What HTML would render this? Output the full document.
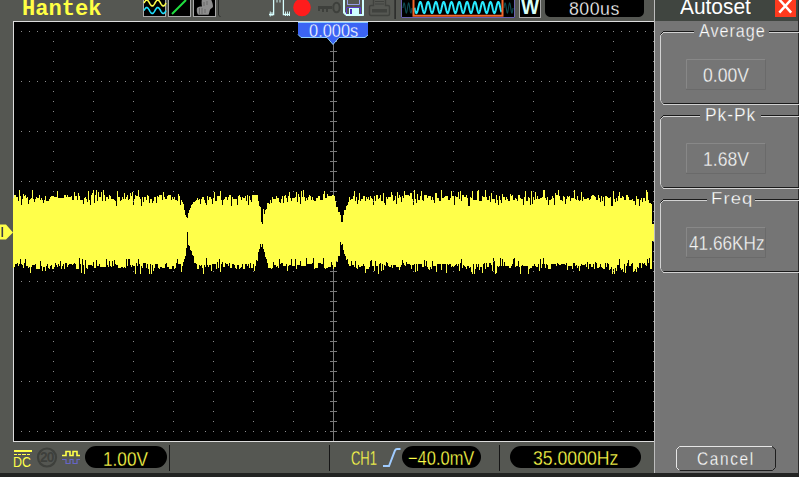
<!DOCTYPE html>
<html><head><meta charset="utf-8">
<style>
html,body{margin:0;padding:0;width:799px;height:477px;overflow:hidden;background:#555752;}
body{position:relative;font-family:"Liberation Sans",sans-serif;}
.a{position:absolute;}
.t{position:absolute;white-space:nowrap;line-height:1;}
.lab{color:#fff;font-size:17px;letter-spacing:0.6px;}
.val{color:#f4f4f4;font-size:18px;}
</style></head><body>

<!-- bottom dark strip -->
<div class="a" style="left:0;top:473px;width:799px;height:4px;background:#222322;"></div>

<!-- grid -->
<div class="a" style="left:13px;top:21px;width:641px;height:421px;background:#000;"></div>
<svg class="a" style="left:0;top:0" width="799" height="477" viewBox="0 0 799 477" shape-rendering="crispEdges">
  <rect x="13" y="21" width="641" height="1" fill="#dcdcdc"/>
  <rect x="13" y="441" width="641" height="1" fill="#dcdcdc"/>
  <rect x="13" y="21" width="1" height="421" fill="#dcdcdc"/>
  <path d="M21,31h1v1h-1zM29,31h1v1h-1zM37,31h1v1h-1zM45,31h1v1h-1zM53,31h1v1h-1zM61,31h1v1h-1zM69,31h1v1h-1zM77,31h1v1h-1zM85,31h1v1h-1zM93,31h1v1h-1zM101,31h1v1h-1zM109,31h1v1h-1zM117,31h1v1h-1zM125,31h1v1h-1zM133,31h1v1h-1zM141,31h1v1h-1zM149,31h1v1h-1zM157,31h1v1h-1zM165,31h1v1h-1zM173,31h1v1h-1zM181,31h1v1h-1zM189,31h1v1h-1zM197,31h1v1h-1zM205,31h1v1h-1zM213,31h1v1h-1zM221,31h1v1h-1zM229,31h1v1h-1zM237,31h1v1h-1zM245,31h1v1h-1zM253,31h1v1h-1zM261,31h1v1h-1zM269,31h1v1h-1zM277,31h1v1h-1zM285,31h1v1h-1zM293,31h1v1h-1zM301,31h1v1h-1zM309,31h1v1h-1zM317,31h1v1h-1zM325,31h1v1h-1zM333,31h1v1h-1zM341,31h1v1h-1zM349,31h1v1h-1zM357,31h1v1h-1zM365,31h1v1h-1zM373,31h1v1h-1zM381,31h1v1h-1zM389,31h1v1h-1zM397,31h1v1h-1zM405,31h1v1h-1zM413,31h1v1h-1zM421,31h1v1h-1zM429,31h1v1h-1zM437,31h1v1h-1zM445,31h1v1h-1zM453,31h1v1h-1zM461,31h1v1h-1zM469,31h1v1h-1zM477,31h1v1h-1zM485,31h1v1h-1zM493,31h1v1h-1zM501,31h1v1h-1zM509,31h1v1h-1zM517,31h1v1h-1zM525,31h1v1h-1zM533,31h1v1h-1zM541,31h1v1h-1zM549,31h1v1h-1zM557,31h1v1h-1zM565,31h1v1h-1zM573,31h1v1h-1zM581,31h1v1h-1zM589,31h1v1h-1zM597,31h1v1h-1zM605,31h1v1h-1zM613,31h1v1h-1zM621,31h1v1h-1zM629,31h1v1h-1zM637,31h1v1h-1zM645,31h1v1h-1zM653,31h1v1h-1zM21,81h1v1h-1zM29,81h1v1h-1zM37,81h1v1h-1zM45,81h1v1h-1zM53,81h1v1h-1zM61,81h1v1h-1zM69,81h1v1h-1zM77,81h1v1h-1zM85,81h1v1h-1zM93,81h1v1h-1zM101,81h1v1h-1zM109,81h1v1h-1zM117,81h1v1h-1zM125,81h1v1h-1zM133,81h1v1h-1zM141,81h1v1h-1zM149,81h1v1h-1zM157,81h1v1h-1zM165,81h1v1h-1zM173,81h1v1h-1zM181,81h1v1h-1zM189,81h1v1h-1zM197,81h1v1h-1zM205,81h1v1h-1zM213,81h1v1h-1zM221,81h1v1h-1zM229,81h1v1h-1zM237,81h1v1h-1zM245,81h1v1h-1zM253,81h1v1h-1zM261,81h1v1h-1zM269,81h1v1h-1zM277,81h1v1h-1zM285,81h1v1h-1zM293,81h1v1h-1zM301,81h1v1h-1zM309,81h1v1h-1zM317,81h1v1h-1zM325,81h1v1h-1zM333,81h1v1h-1zM341,81h1v1h-1zM349,81h1v1h-1zM357,81h1v1h-1zM365,81h1v1h-1zM373,81h1v1h-1zM381,81h1v1h-1zM389,81h1v1h-1zM397,81h1v1h-1zM405,81h1v1h-1zM413,81h1v1h-1zM421,81h1v1h-1zM429,81h1v1h-1zM437,81h1v1h-1zM445,81h1v1h-1zM453,81h1v1h-1zM461,81h1v1h-1zM469,81h1v1h-1zM477,81h1v1h-1zM485,81h1v1h-1zM493,81h1v1h-1zM501,81h1v1h-1zM509,81h1v1h-1zM517,81h1v1h-1zM525,81h1v1h-1zM533,81h1v1h-1zM541,81h1v1h-1zM549,81h1v1h-1zM557,81h1v1h-1zM565,81h1v1h-1zM573,81h1v1h-1zM581,81h1v1h-1zM589,81h1v1h-1zM597,81h1v1h-1zM605,81h1v1h-1zM613,81h1v1h-1zM621,81h1v1h-1zM629,81h1v1h-1zM637,81h1v1h-1zM645,81h1v1h-1zM653,81h1v1h-1zM21,131h1v1h-1zM29,131h1v1h-1zM37,131h1v1h-1zM45,131h1v1h-1zM53,131h1v1h-1zM61,131h1v1h-1zM69,131h1v1h-1zM77,131h1v1h-1zM85,131h1v1h-1zM93,131h1v1h-1zM101,131h1v1h-1zM109,131h1v1h-1zM117,131h1v1h-1zM125,131h1v1h-1zM133,131h1v1h-1zM141,131h1v1h-1zM149,131h1v1h-1zM157,131h1v1h-1zM165,131h1v1h-1zM173,131h1v1h-1zM181,131h1v1h-1zM189,131h1v1h-1zM197,131h1v1h-1zM205,131h1v1h-1zM213,131h1v1h-1zM221,131h1v1h-1zM229,131h1v1h-1zM237,131h1v1h-1zM245,131h1v1h-1zM253,131h1v1h-1zM261,131h1v1h-1zM269,131h1v1h-1zM277,131h1v1h-1zM285,131h1v1h-1zM293,131h1v1h-1zM301,131h1v1h-1zM309,131h1v1h-1zM317,131h1v1h-1zM325,131h1v1h-1zM333,131h1v1h-1zM341,131h1v1h-1zM349,131h1v1h-1zM357,131h1v1h-1zM365,131h1v1h-1zM373,131h1v1h-1zM381,131h1v1h-1zM389,131h1v1h-1zM397,131h1v1h-1zM405,131h1v1h-1zM413,131h1v1h-1zM421,131h1v1h-1zM429,131h1v1h-1zM437,131h1v1h-1zM445,131h1v1h-1zM453,131h1v1h-1zM461,131h1v1h-1zM469,131h1v1h-1zM477,131h1v1h-1zM485,131h1v1h-1zM493,131h1v1h-1zM501,131h1v1h-1zM509,131h1v1h-1zM517,131h1v1h-1zM525,131h1v1h-1zM533,131h1v1h-1zM541,131h1v1h-1zM549,131h1v1h-1zM557,131h1v1h-1zM565,131h1v1h-1zM573,131h1v1h-1zM581,131h1v1h-1zM589,131h1v1h-1zM597,131h1v1h-1zM605,131h1v1h-1zM613,131h1v1h-1zM621,131h1v1h-1zM629,131h1v1h-1zM637,131h1v1h-1zM645,131h1v1h-1zM653,131h1v1h-1zM21,181h1v1h-1zM29,181h1v1h-1zM37,181h1v1h-1zM45,181h1v1h-1zM53,181h1v1h-1zM61,181h1v1h-1zM69,181h1v1h-1zM77,181h1v1h-1zM85,181h1v1h-1zM93,181h1v1h-1zM101,181h1v1h-1zM109,181h1v1h-1zM117,181h1v1h-1zM125,181h1v1h-1zM133,181h1v1h-1zM141,181h1v1h-1zM149,181h1v1h-1zM157,181h1v1h-1zM165,181h1v1h-1zM173,181h1v1h-1zM181,181h1v1h-1zM189,181h1v1h-1zM197,181h1v1h-1zM205,181h1v1h-1zM213,181h1v1h-1zM221,181h1v1h-1zM229,181h1v1h-1zM237,181h1v1h-1zM245,181h1v1h-1zM253,181h1v1h-1zM261,181h1v1h-1zM269,181h1v1h-1zM277,181h1v1h-1zM285,181h1v1h-1zM293,181h1v1h-1zM301,181h1v1h-1zM309,181h1v1h-1zM317,181h1v1h-1zM325,181h1v1h-1zM333,181h1v1h-1zM341,181h1v1h-1zM349,181h1v1h-1zM357,181h1v1h-1zM365,181h1v1h-1zM373,181h1v1h-1zM381,181h1v1h-1zM389,181h1v1h-1zM397,181h1v1h-1zM405,181h1v1h-1zM413,181h1v1h-1zM421,181h1v1h-1zM429,181h1v1h-1zM437,181h1v1h-1zM445,181h1v1h-1zM453,181h1v1h-1zM461,181h1v1h-1zM469,181h1v1h-1zM477,181h1v1h-1zM485,181h1v1h-1zM493,181h1v1h-1zM501,181h1v1h-1zM509,181h1v1h-1zM517,181h1v1h-1zM525,181h1v1h-1zM533,181h1v1h-1zM541,181h1v1h-1zM549,181h1v1h-1zM557,181h1v1h-1zM565,181h1v1h-1zM573,181h1v1h-1zM581,181h1v1h-1zM589,181h1v1h-1zM597,181h1v1h-1zM605,181h1v1h-1zM613,181h1v1h-1zM621,181h1v1h-1zM629,181h1v1h-1zM637,181h1v1h-1zM645,181h1v1h-1zM653,181h1v1h-1zM21,231h1v1h-1zM29,231h1v1h-1zM37,231h1v1h-1zM45,231h1v1h-1zM53,231h1v1h-1zM61,231h1v1h-1zM69,231h1v1h-1zM77,231h1v1h-1zM85,231h1v1h-1zM93,231h1v1h-1zM101,231h1v1h-1zM109,231h1v1h-1zM117,231h1v1h-1zM125,231h1v1h-1zM133,231h1v1h-1zM141,231h1v1h-1zM149,231h1v1h-1zM157,231h1v1h-1zM165,231h1v1h-1zM173,231h1v1h-1zM181,231h1v1h-1zM189,231h1v1h-1zM197,231h1v1h-1zM205,231h1v1h-1zM213,231h1v1h-1zM221,231h1v1h-1zM229,231h1v1h-1zM237,231h1v1h-1zM245,231h1v1h-1zM253,231h1v1h-1zM261,231h1v1h-1zM269,231h1v1h-1zM277,231h1v1h-1zM285,231h1v1h-1zM293,231h1v1h-1zM301,231h1v1h-1zM309,231h1v1h-1zM317,231h1v1h-1zM325,231h1v1h-1zM333,231h1v1h-1zM341,231h1v1h-1zM349,231h1v1h-1zM357,231h1v1h-1zM365,231h1v1h-1zM373,231h1v1h-1zM381,231h1v1h-1zM389,231h1v1h-1zM397,231h1v1h-1zM405,231h1v1h-1zM413,231h1v1h-1zM421,231h1v1h-1zM429,231h1v1h-1zM437,231h1v1h-1zM445,231h1v1h-1zM453,231h1v1h-1zM461,231h1v1h-1zM469,231h1v1h-1zM477,231h1v1h-1zM485,231h1v1h-1zM493,231h1v1h-1zM501,231h1v1h-1zM509,231h1v1h-1zM517,231h1v1h-1zM525,231h1v1h-1zM533,231h1v1h-1zM541,231h1v1h-1zM549,231h1v1h-1zM557,231h1v1h-1zM565,231h1v1h-1zM573,231h1v1h-1zM581,231h1v1h-1zM589,231h1v1h-1zM597,231h1v1h-1zM605,231h1v1h-1zM613,231h1v1h-1zM621,231h1v1h-1zM629,231h1v1h-1zM637,231h1v1h-1zM645,231h1v1h-1zM653,231h1v1h-1zM21,281h1v1h-1zM29,281h1v1h-1zM37,281h1v1h-1zM45,281h1v1h-1zM53,281h1v1h-1zM61,281h1v1h-1zM69,281h1v1h-1zM77,281h1v1h-1zM85,281h1v1h-1zM93,281h1v1h-1zM101,281h1v1h-1zM109,281h1v1h-1zM117,281h1v1h-1zM125,281h1v1h-1zM133,281h1v1h-1zM141,281h1v1h-1zM149,281h1v1h-1zM157,281h1v1h-1zM165,281h1v1h-1zM173,281h1v1h-1zM181,281h1v1h-1zM189,281h1v1h-1zM197,281h1v1h-1zM205,281h1v1h-1zM213,281h1v1h-1zM221,281h1v1h-1zM229,281h1v1h-1zM237,281h1v1h-1zM245,281h1v1h-1zM253,281h1v1h-1zM261,281h1v1h-1zM269,281h1v1h-1zM277,281h1v1h-1zM285,281h1v1h-1zM293,281h1v1h-1zM301,281h1v1h-1zM309,281h1v1h-1zM317,281h1v1h-1zM325,281h1v1h-1zM333,281h1v1h-1zM341,281h1v1h-1zM349,281h1v1h-1zM357,281h1v1h-1zM365,281h1v1h-1zM373,281h1v1h-1zM381,281h1v1h-1zM389,281h1v1h-1zM397,281h1v1h-1zM405,281h1v1h-1zM413,281h1v1h-1zM421,281h1v1h-1zM429,281h1v1h-1zM437,281h1v1h-1zM445,281h1v1h-1zM453,281h1v1h-1zM461,281h1v1h-1zM469,281h1v1h-1zM477,281h1v1h-1zM485,281h1v1h-1zM493,281h1v1h-1zM501,281h1v1h-1zM509,281h1v1h-1zM517,281h1v1h-1zM525,281h1v1h-1zM533,281h1v1h-1zM541,281h1v1h-1zM549,281h1v1h-1zM557,281h1v1h-1zM565,281h1v1h-1zM573,281h1v1h-1zM581,281h1v1h-1zM589,281h1v1h-1zM597,281h1v1h-1zM605,281h1v1h-1zM613,281h1v1h-1zM621,281h1v1h-1zM629,281h1v1h-1zM637,281h1v1h-1zM645,281h1v1h-1zM653,281h1v1h-1zM21,331h1v1h-1zM29,331h1v1h-1zM37,331h1v1h-1zM45,331h1v1h-1zM53,331h1v1h-1zM61,331h1v1h-1zM69,331h1v1h-1zM77,331h1v1h-1zM85,331h1v1h-1zM93,331h1v1h-1zM101,331h1v1h-1zM109,331h1v1h-1zM117,331h1v1h-1zM125,331h1v1h-1zM133,331h1v1h-1zM141,331h1v1h-1zM149,331h1v1h-1zM157,331h1v1h-1zM165,331h1v1h-1zM173,331h1v1h-1zM181,331h1v1h-1zM189,331h1v1h-1zM197,331h1v1h-1zM205,331h1v1h-1zM213,331h1v1h-1zM221,331h1v1h-1zM229,331h1v1h-1zM237,331h1v1h-1zM245,331h1v1h-1zM253,331h1v1h-1zM261,331h1v1h-1zM269,331h1v1h-1zM277,331h1v1h-1zM285,331h1v1h-1zM293,331h1v1h-1zM301,331h1v1h-1zM309,331h1v1h-1zM317,331h1v1h-1zM325,331h1v1h-1zM333,331h1v1h-1zM341,331h1v1h-1zM349,331h1v1h-1zM357,331h1v1h-1zM365,331h1v1h-1zM373,331h1v1h-1zM381,331h1v1h-1zM389,331h1v1h-1zM397,331h1v1h-1zM405,331h1v1h-1zM413,331h1v1h-1zM421,331h1v1h-1zM429,331h1v1h-1zM437,331h1v1h-1zM445,331h1v1h-1zM453,331h1v1h-1zM461,331h1v1h-1zM469,331h1v1h-1zM477,331h1v1h-1zM485,331h1v1h-1zM493,331h1v1h-1zM501,331h1v1h-1zM509,331h1v1h-1zM517,331h1v1h-1zM525,331h1v1h-1zM533,331h1v1h-1zM541,331h1v1h-1zM549,331h1v1h-1zM557,331h1v1h-1zM565,331h1v1h-1zM573,331h1v1h-1zM581,331h1v1h-1zM589,331h1v1h-1zM597,331h1v1h-1zM605,331h1v1h-1zM613,331h1v1h-1zM621,331h1v1h-1zM629,331h1v1h-1zM637,331h1v1h-1zM645,331h1v1h-1zM653,331h1v1h-1zM21,381h1v1h-1zM29,381h1v1h-1zM37,381h1v1h-1zM45,381h1v1h-1zM53,381h1v1h-1zM61,381h1v1h-1zM69,381h1v1h-1zM77,381h1v1h-1zM85,381h1v1h-1zM93,381h1v1h-1zM101,381h1v1h-1zM109,381h1v1h-1zM117,381h1v1h-1zM125,381h1v1h-1zM133,381h1v1h-1zM141,381h1v1h-1zM149,381h1v1h-1zM157,381h1v1h-1zM165,381h1v1h-1zM173,381h1v1h-1zM181,381h1v1h-1zM189,381h1v1h-1zM197,381h1v1h-1zM205,381h1v1h-1zM213,381h1v1h-1zM221,381h1v1h-1zM229,381h1v1h-1zM237,381h1v1h-1zM245,381h1v1h-1zM253,381h1v1h-1zM261,381h1v1h-1zM269,381h1v1h-1zM277,381h1v1h-1zM285,381h1v1h-1zM293,381h1v1h-1zM301,381h1v1h-1zM309,381h1v1h-1zM317,381h1v1h-1zM325,381h1v1h-1zM333,381h1v1h-1zM341,381h1v1h-1zM349,381h1v1h-1zM357,381h1v1h-1zM365,381h1v1h-1zM373,381h1v1h-1zM381,381h1v1h-1zM389,381h1v1h-1zM397,381h1v1h-1zM405,381h1v1h-1zM413,381h1v1h-1zM421,381h1v1h-1zM429,381h1v1h-1zM437,381h1v1h-1zM445,381h1v1h-1zM453,381h1v1h-1zM461,381h1v1h-1zM469,381h1v1h-1zM477,381h1v1h-1zM485,381h1v1h-1zM493,381h1v1h-1zM501,381h1v1h-1zM509,381h1v1h-1zM517,381h1v1h-1zM525,381h1v1h-1zM533,381h1v1h-1zM541,381h1v1h-1zM549,381h1v1h-1zM557,381h1v1h-1zM565,381h1v1h-1zM573,381h1v1h-1zM581,381h1v1h-1zM589,381h1v1h-1zM597,381h1v1h-1zM605,381h1v1h-1zM613,381h1v1h-1zM621,381h1v1h-1zM629,381h1v1h-1zM637,381h1v1h-1zM645,381h1v1h-1zM653,381h1v1h-1zM21,431h1v1h-1zM29,431h1v1h-1zM37,431h1v1h-1zM45,431h1v1h-1zM53,431h1v1h-1zM61,431h1v1h-1zM69,431h1v1h-1zM77,431h1v1h-1zM85,431h1v1h-1zM93,431h1v1h-1zM101,431h1v1h-1zM109,431h1v1h-1zM117,431h1v1h-1zM125,431h1v1h-1zM133,431h1v1h-1zM141,431h1v1h-1zM149,431h1v1h-1zM157,431h1v1h-1zM165,431h1v1h-1zM173,431h1v1h-1zM181,431h1v1h-1zM189,431h1v1h-1zM197,431h1v1h-1zM205,431h1v1h-1zM213,431h1v1h-1zM221,431h1v1h-1zM229,431h1v1h-1zM237,431h1v1h-1zM245,431h1v1h-1zM253,431h1v1h-1zM261,431h1v1h-1zM269,431h1v1h-1zM277,431h1v1h-1zM285,431h1v1h-1zM293,431h1v1h-1zM301,431h1v1h-1zM309,431h1v1h-1zM317,431h1v1h-1zM325,431h1v1h-1zM333,431h1v1h-1zM341,431h1v1h-1zM349,431h1v1h-1zM357,431h1v1h-1zM365,431h1v1h-1zM373,431h1v1h-1zM381,431h1v1h-1zM389,431h1v1h-1zM397,431h1v1h-1zM405,431h1v1h-1zM413,431h1v1h-1zM421,431h1v1h-1zM429,431h1v1h-1zM437,431h1v1h-1zM445,431h1v1h-1zM453,431h1v1h-1zM461,431h1v1h-1zM469,431h1v1h-1zM477,431h1v1h-1zM485,431h1v1h-1zM493,431h1v1h-1zM501,431h1v1h-1zM509,431h1v1h-1zM517,431h1v1h-1zM525,431h1v1h-1zM533,431h1v1h-1zM541,431h1v1h-1zM549,431h1v1h-1zM557,431h1v1h-1zM565,431h1v1h-1zM573,431h1v1h-1zM581,431h1v1h-1zM589,431h1v1h-1zM597,431h1v1h-1zM605,431h1v1h-1zM613,431h1v1h-1zM621,431h1v1h-1zM629,431h1v1h-1zM637,431h1v1h-1zM645,431h1v1h-1zM653,431h1v1h-1zM53,41h1v1h-1zM53,51h1v1h-1zM53,61h1v1h-1zM53,71h1v1h-1zM53,91h1v1h-1zM53,101h1v1h-1zM53,111h1v1h-1zM53,121h1v1h-1zM53,141h1v1h-1zM53,151h1v1h-1zM53,161h1v1h-1zM53,171h1v1h-1zM53,191h1v1h-1zM53,201h1v1h-1zM53,211h1v1h-1zM53,221h1v1h-1zM53,241h1v1h-1zM53,251h1v1h-1zM53,261h1v1h-1zM53,271h1v1h-1zM53,291h1v1h-1zM53,301h1v1h-1zM53,311h1v1h-1zM53,321h1v1h-1zM53,341h1v1h-1zM53,351h1v1h-1zM53,361h1v1h-1zM53,371h1v1h-1zM53,391h1v1h-1zM53,401h1v1h-1zM53,411h1v1h-1zM53,421h1v1h-1zM93,41h1v1h-1zM93,51h1v1h-1zM93,61h1v1h-1zM93,71h1v1h-1zM93,91h1v1h-1zM93,101h1v1h-1zM93,111h1v1h-1zM93,121h1v1h-1zM93,141h1v1h-1zM93,151h1v1h-1zM93,161h1v1h-1zM93,171h1v1h-1zM93,191h1v1h-1zM93,201h1v1h-1zM93,211h1v1h-1zM93,221h1v1h-1zM93,241h1v1h-1zM93,251h1v1h-1zM93,261h1v1h-1zM93,271h1v1h-1zM93,291h1v1h-1zM93,301h1v1h-1zM93,311h1v1h-1zM93,321h1v1h-1zM93,341h1v1h-1zM93,351h1v1h-1zM93,361h1v1h-1zM93,371h1v1h-1zM93,391h1v1h-1zM93,401h1v1h-1zM93,411h1v1h-1zM93,421h1v1h-1zM133,41h1v1h-1zM133,51h1v1h-1zM133,61h1v1h-1zM133,71h1v1h-1zM133,91h1v1h-1zM133,101h1v1h-1zM133,111h1v1h-1zM133,121h1v1h-1zM133,141h1v1h-1zM133,151h1v1h-1zM133,161h1v1h-1zM133,171h1v1h-1zM133,191h1v1h-1zM133,201h1v1h-1zM133,211h1v1h-1zM133,221h1v1h-1zM133,241h1v1h-1zM133,251h1v1h-1zM133,261h1v1h-1zM133,271h1v1h-1zM133,291h1v1h-1zM133,301h1v1h-1zM133,311h1v1h-1zM133,321h1v1h-1zM133,341h1v1h-1zM133,351h1v1h-1zM133,361h1v1h-1zM133,371h1v1h-1zM133,391h1v1h-1zM133,401h1v1h-1zM133,411h1v1h-1zM133,421h1v1h-1zM173,41h1v1h-1zM173,51h1v1h-1zM173,61h1v1h-1zM173,71h1v1h-1zM173,91h1v1h-1zM173,101h1v1h-1zM173,111h1v1h-1zM173,121h1v1h-1zM173,141h1v1h-1zM173,151h1v1h-1zM173,161h1v1h-1zM173,171h1v1h-1zM173,191h1v1h-1zM173,201h1v1h-1zM173,211h1v1h-1zM173,221h1v1h-1zM173,241h1v1h-1zM173,251h1v1h-1zM173,261h1v1h-1zM173,271h1v1h-1zM173,291h1v1h-1zM173,301h1v1h-1zM173,311h1v1h-1zM173,321h1v1h-1zM173,341h1v1h-1zM173,351h1v1h-1zM173,361h1v1h-1zM173,371h1v1h-1zM173,391h1v1h-1zM173,401h1v1h-1zM173,411h1v1h-1zM173,421h1v1h-1zM213,41h1v1h-1zM213,51h1v1h-1zM213,61h1v1h-1zM213,71h1v1h-1zM213,91h1v1h-1zM213,101h1v1h-1zM213,111h1v1h-1zM213,121h1v1h-1zM213,141h1v1h-1zM213,151h1v1h-1zM213,161h1v1h-1zM213,171h1v1h-1zM213,191h1v1h-1zM213,201h1v1h-1zM213,211h1v1h-1zM213,221h1v1h-1zM213,241h1v1h-1zM213,251h1v1h-1zM213,261h1v1h-1zM213,271h1v1h-1zM213,291h1v1h-1zM213,301h1v1h-1zM213,311h1v1h-1zM213,321h1v1h-1zM213,341h1v1h-1zM213,351h1v1h-1zM213,361h1v1h-1zM213,371h1v1h-1zM213,391h1v1h-1zM213,401h1v1h-1zM213,411h1v1h-1zM213,421h1v1h-1zM253,41h1v1h-1zM253,51h1v1h-1zM253,61h1v1h-1zM253,71h1v1h-1zM253,91h1v1h-1zM253,101h1v1h-1zM253,111h1v1h-1zM253,121h1v1h-1zM253,141h1v1h-1zM253,151h1v1h-1zM253,161h1v1h-1zM253,171h1v1h-1zM253,191h1v1h-1zM253,201h1v1h-1zM253,211h1v1h-1zM253,221h1v1h-1zM253,241h1v1h-1zM253,251h1v1h-1zM253,261h1v1h-1zM253,271h1v1h-1zM253,291h1v1h-1zM253,301h1v1h-1zM253,311h1v1h-1zM253,321h1v1h-1zM253,341h1v1h-1zM253,351h1v1h-1zM253,361h1v1h-1zM253,371h1v1h-1zM253,391h1v1h-1zM253,401h1v1h-1zM253,411h1v1h-1zM253,421h1v1h-1zM293,41h1v1h-1zM293,51h1v1h-1zM293,61h1v1h-1zM293,71h1v1h-1zM293,91h1v1h-1zM293,101h1v1h-1zM293,111h1v1h-1zM293,121h1v1h-1zM293,141h1v1h-1zM293,151h1v1h-1zM293,161h1v1h-1zM293,171h1v1h-1zM293,191h1v1h-1zM293,201h1v1h-1zM293,211h1v1h-1zM293,221h1v1h-1zM293,241h1v1h-1zM293,251h1v1h-1zM293,261h1v1h-1zM293,271h1v1h-1zM293,291h1v1h-1zM293,301h1v1h-1zM293,311h1v1h-1zM293,321h1v1h-1zM293,341h1v1h-1zM293,351h1v1h-1zM293,361h1v1h-1zM293,371h1v1h-1zM293,391h1v1h-1zM293,401h1v1h-1zM293,411h1v1h-1zM293,421h1v1h-1zM373,41h1v1h-1zM373,51h1v1h-1zM373,61h1v1h-1zM373,71h1v1h-1zM373,91h1v1h-1zM373,101h1v1h-1zM373,111h1v1h-1zM373,121h1v1h-1zM373,141h1v1h-1zM373,151h1v1h-1zM373,161h1v1h-1zM373,171h1v1h-1zM373,191h1v1h-1zM373,201h1v1h-1zM373,211h1v1h-1zM373,221h1v1h-1zM373,241h1v1h-1zM373,251h1v1h-1zM373,261h1v1h-1zM373,271h1v1h-1zM373,291h1v1h-1zM373,301h1v1h-1zM373,311h1v1h-1zM373,321h1v1h-1zM373,341h1v1h-1zM373,351h1v1h-1zM373,361h1v1h-1zM373,371h1v1h-1zM373,391h1v1h-1zM373,401h1v1h-1zM373,411h1v1h-1zM373,421h1v1h-1zM413,41h1v1h-1zM413,51h1v1h-1zM413,61h1v1h-1zM413,71h1v1h-1zM413,91h1v1h-1zM413,101h1v1h-1zM413,111h1v1h-1zM413,121h1v1h-1zM413,141h1v1h-1zM413,151h1v1h-1zM413,161h1v1h-1zM413,171h1v1h-1zM413,191h1v1h-1zM413,201h1v1h-1zM413,211h1v1h-1zM413,221h1v1h-1zM413,241h1v1h-1zM413,251h1v1h-1zM413,261h1v1h-1zM413,271h1v1h-1zM413,291h1v1h-1zM413,301h1v1h-1zM413,311h1v1h-1zM413,321h1v1h-1zM413,341h1v1h-1zM413,351h1v1h-1zM413,361h1v1h-1zM413,371h1v1h-1zM413,391h1v1h-1zM413,401h1v1h-1zM413,411h1v1h-1zM413,421h1v1h-1zM453,41h1v1h-1zM453,51h1v1h-1zM453,61h1v1h-1zM453,71h1v1h-1zM453,91h1v1h-1zM453,101h1v1h-1zM453,111h1v1h-1zM453,121h1v1h-1zM453,141h1v1h-1zM453,151h1v1h-1zM453,161h1v1h-1zM453,171h1v1h-1zM453,191h1v1h-1zM453,201h1v1h-1zM453,211h1v1h-1zM453,221h1v1h-1zM453,241h1v1h-1zM453,251h1v1h-1zM453,261h1v1h-1zM453,271h1v1h-1zM453,291h1v1h-1zM453,301h1v1h-1zM453,311h1v1h-1zM453,321h1v1h-1zM453,341h1v1h-1zM453,351h1v1h-1zM453,361h1v1h-1zM453,371h1v1h-1zM453,391h1v1h-1zM453,401h1v1h-1zM453,411h1v1h-1zM453,421h1v1h-1zM493,41h1v1h-1zM493,51h1v1h-1zM493,61h1v1h-1zM493,71h1v1h-1zM493,91h1v1h-1zM493,101h1v1h-1zM493,111h1v1h-1zM493,121h1v1h-1zM493,141h1v1h-1zM493,151h1v1h-1zM493,161h1v1h-1zM493,171h1v1h-1zM493,191h1v1h-1zM493,201h1v1h-1zM493,211h1v1h-1zM493,221h1v1h-1zM493,241h1v1h-1zM493,251h1v1h-1zM493,261h1v1h-1zM493,271h1v1h-1zM493,291h1v1h-1zM493,301h1v1h-1zM493,311h1v1h-1zM493,321h1v1h-1zM493,341h1v1h-1zM493,351h1v1h-1zM493,361h1v1h-1zM493,371h1v1h-1zM493,391h1v1h-1zM493,401h1v1h-1zM493,411h1v1h-1zM493,421h1v1h-1zM533,41h1v1h-1zM533,51h1v1h-1zM533,61h1v1h-1zM533,71h1v1h-1zM533,91h1v1h-1zM533,101h1v1h-1zM533,111h1v1h-1zM533,121h1v1h-1zM533,141h1v1h-1zM533,151h1v1h-1zM533,161h1v1h-1zM533,171h1v1h-1zM533,191h1v1h-1zM533,201h1v1h-1zM533,211h1v1h-1zM533,221h1v1h-1zM533,241h1v1h-1zM533,251h1v1h-1zM533,261h1v1h-1zM533,271h1v1h-1zM533,291h1v1h-1zM533,301h1v1h-1zM533,311h1v1h-1zM533,321h1v1h-1zM533,341h1v1h-1zM533,351h1v1h-1zM533,361h1v1h-1zM533,371h1v1h-1zM533,391h1v1h-1zM533,401h1v1h-1zM533,411h1v1h-1zM533,421h1v1h-1zM573,41h1v1h-1zM573,51h1v1h-1zM573,61h1v1h-1zM573,71h1v1h-1zM573,91h1v1h-1zM573,101h1v1h-1zM573,111h1v1h-1zM573,121h1v1h-1zM573,141h1v1h-1zM573,151h1v1h-1zM573,161h1v1h-1zM573,171h1v1h-1zM573,191h1v1h-1zM573,201h1v1h-1zM573,211h1v1h-1zM573,221h1v1h-1zM573,241h1v1h-1zM573,251h1v1h-1zM573,261h1v1h-1zM573,271h1v1h-1zM573,291h1v1h-1zM573,301h1v1h-1zM573,311h1v1h-1zM573,321h1v1h-1zM573,341h1v1h-1zM573,351h1v1h-1zM573,361h1v1h-1zM573,371h1v1h-1zM573,391h1v1h-1zM573,401h1v1h-1zM573,411h1v1h-1zM573,421h1v1h-1zM613,41h1v1h-1zM613,51h1v1h-1zM613,61h1v1h-1zM613,71h1v1h-1zM613,91h1v1h-1zM613,101h1v1h-1zM613,111h1v1h-1zM613,121h1v1h-1zM613,141h1v1h-1zM613,151h1v1h-1zM613,161h1v1h-1zM613,171h1v1h-1zM613,191h1v1h-1zM613,201h1v1h-1zM613,211h1v1h-1zM613,221h1v1h-1zM613,241h1v1h-1zM613,251h1v1h-1zM613,261h1v1h-1zM613,271h1v1h-1zM613,291h1v1h-1zM613,301h1v1h-1zM613,311h1v1h-1zM613,321h1v1h-1zM613,341h1v1h-1zM613,351h1v1h-1zM613,361h1v1h-1zM613,371h1v1h-1zM613,391h1v1h-1zM613,401h1v1h-1zM613,411h1v1h-1zM613,421h1v1h-1zM653,41h1v1h-1zM653,51h1v1h-1zM653,61h1v1h-1zM653,71h1v1h-1zM653,91h1v1h-1zM653,101h1v1h-1zM653,111h1v1h-1zM653,121h1v1h-1zM653,141h1v1h-1zM653,151h1v1h-1zM653,161h1v1h-1zM653,171h1v1h-1zM653,191h1v1h-1zM653,201h1v1h-1zM653,211h1v1h-1zM653,221h1v1h-1zM653,241h1v1h-1zM653,251h1v1h-1zM653,261h1v1h-1zM653,271h1v1h-1zM653,291h1v1h-1zM653,301h1v1h-1zM653,311h1v1h-1zM653,321h1v1h-1zM653,341h1v1h-1zM653,351h1v1h-1zM653,361h1v1h-1zM653,371h1v1h-1zM653,391h1v1h-1zM653,401h1v1h-1zM653,411h1v1h-1zM653,421h1v1h-1z" fill="#8a8a8a"/>
  <rect x="333" y="22" width="1" height="419" fill="#7a7a7a"/>
  <path d="M330,31h7v1h-7zM330,41h7v1h-7zM330,51h7v1h-7zM330,61h7v1h-7zM330,71h7v1h-7zM330,81h7v1h-7zM330,91h7v1h-7zM330,101h7v1h-7zM330,111h7v1h-7zM330,121h7v1h-7zM330,131h7v1h-7zM330,141h7v1h-7zM330,151h7v1h-7zM330,161h7v1h-7zM330,171h7v1h-7zM330,181h7v1h-7zM330,191h7v1h-7zM330,201h7v1h-7zM330,211h7v1h-7zM330,221h7v1h-7zM330,231h7v1h-7zM330,241h7v1h-7zM330,251h7v1h-7zM330,261h7v1h-7zM330,271h7v1h-7zM330,281h7v1h-7zM330,291h7v1h-7zM330,301h7v1h-7zM330,311h7v1h-7zM330,321h7v1h-7zM330,331h7v1h-7zM330,341h7v1h-7zM330,351h7v1h-7zM330,361h7v1h-7zM330,371h7v1h-7zM330,381h7v1h-7zM330,391h7v1h-7zM330,401h7v1h-7zM330,411h7v1h-7zM330,421h7v1h-7zM330,431h7v1h-7zM21,228v7h1v-7zM29,228v7h1v-7zM37,228v7h1v-7zM45,228v7h1v-7zM53,228v7h1v-7zM61,228v7h1v-7zM69,228v7h1v-7zM77,228v7h1v-7zM85,228v7h1v-7zM93,228v7h1v-7zM101,228v7h1v-7zM109,228v7h1v-7zM117,228v7h1v-7zM125,228v7h1v-7zM133,228v7h1v-7zM141,228v7h1v-7zM149,228v7h1v-7zM157,228v7h1v-7zM165,228v7h1v-7zM173,228v7h1v-7zM181,228v7h1v-7zM189,228v7h1v-7zM197,228v7h1v-7zM205,228v7h1v-7zM213,228v7h1v-7zM221,228v7h1v-7zM229,228v7h1v-7zM237,228v7h1v-7zM245,228v7h1v-7zM253,228v7h1v-7zM261,228v7h1v-7zM269,228v7h1v-7zM277,228v7h1v-7zM285,228v7h1v-7zM293,228v7h1v-7zM301,228v7h1v-7zM309,228v7h1v-7zM317,228v7h1v-7zM325,228v7h1v-7zM333,228v7h1v-7zM341,228v7h1v-7zM349,228v7h1v-7zM357,228v7h1v-7zM365,228v7h1v-7zM373,228v7h1v-7zM381,228v7h1v-7zM389,228v7h1v-7zM397,228v7h1v-7zM405,228v7h1v-7zM413,228v7h1v-7zM421,228v7h1v-7zM429,228v7h1v-7zM437,228v7h1v-7zM445,228v7h1v-7zM453,228v7h1v-7zM461,228v7h1v-7zM469,228v7h1v-7zM477,228v7h1v-7zM485,228v7h1v-7zM493,228v7h1v-7zM501,228v7h1v-7zM509,228v7h1v-7zM517,228v7h1v-7zM525,228v7h1v-7zM533,228v7h1v-7zM541,228v7h1v-7zM549,228v7h1v-7zM557,228v7h1v-7zM565,228v7h1v-7zM573,228v7h1v-7zM581,228v7h1v-7zM589,228v7h1v-7zM597,228v7h1v-7zM605,228v7h1v-7zM613,228v7h1v-7zM621,228v7h1v-7zM629,228v7h1v-7zM637,228v7h1v-7zM645,228v7h1v-7zM653,228v7h1v-7z" fill="#7a7a7a"/>
  <path d="M13,198 14,198 14,195 15,195 15,195 16,195 16,197 17,197 17,197 18,197 18,201 19,201 19,190 20,190 20,196 21,196 21,205 22,205 22,199 23,199 23,194 24,194 24,196 25,196 25,195 26,195 26,198 27,198 27,197 28,197 28,204 29,204 29,200 30,200 30,199 31,199 31,198 32,198 32,190 33,190 33,199 34,199 34,202 35,202 35,199 36,199 36,197 37,197 37,198 38,198 38,198 39,198 39,195 40,195 40,200 41,200 41,198 42,198 42,200 43,200 43,203 44,203 44,200 45,200 45,196 46,196 46,201 47,201 47,201 48,201 48,201 49,201 49,199 50,199 50,197 51,197 51,196 52,196 52,196 53,196 53,196 54,196 54,197 55,197 55,197 56,197 56,197 57,197 57,191 58,191 58,198 59,198 59,198 60,198 60,198 61,198 61,198 62,198 62,198 63,198 63,198 64,198 64,195 65,195 65,195 66,195 66,197 67,197 67,195 68,195 68,197 69,197 69,197 70,197 70,197 71,197 71,196 72,196 72,200 73,200 73,200 74,200 74,192 75,192 75,196 76,196 76,196 77,196 77,200 78,200 78,193 79,193 79,196 80,196 80,200 81,200 81,200 82,200 82,200 83,200 83,204 84,204 84,198 85,198 85,197 86,197 86,199 87,199 87,202 88,202 88,191 89,191 89,200 90,200 90,205 91,205 91,195 92,195 92,193 93,193 93,190 94,190 94,203 95,203 95,195 96,195 96,190 97,190 97,201 98,201 98,192 99,192 99,197 100,197 100,197 101,197 101,192 102,192 102,201 103,201 103,190 104,190 104,195 105,195 105,201 106,201 106,197 107,197 107,197 108,197 108,199 109,199 109,195 110,195 110,196 111,196 111,199 112,199 112,199 113,199 113,199 114,199 114,200 115,200 115,201 116,201 116,206 117,206 117,191 118,191 118,197 119,197 119,197 120,197 120,201 121,201 121,200 122,200 122,197 123,197 123,199 124,199 124,193 125,193 125,199 126,199 126,197 127,197 127,195 128,195 128,200 129,200 129,199 130,199 130,193 131,193 131,196 132,196 132,192 133,192 133,205 134,205 134,199 135,199 135,195 136,195 136,196 137,196 137,196 138,196 138,190 139,190 139,197 140,197 140,199 141,199 141,206 142,206 142,197 143,197 143,202 144,202 144,197 145,197 145,197 146,197 146,200 147,200 147,195 148,195 148,196 149,196 149,203 150,203 150,199 151,199 151,199 152,199 152,203 153,203 153,201 154,201 154,197 155,197 155,197 156,197 156,203 157,203 157,196 158,196 158,197 159,197 159,195 160,195 160,195 161,195 161,195 162,195 162,200 163,200 163,192 164,192 164,197 165,197 165,199 166,199 166,199 167,199 167,196 168,196 168,195 169,195 169,195 170,195 170,195 171,195 171,200 172,200 172,197 173,197 173,199 174,199 174,197 175,197 175,200 176,200 176,200 177,200 177,201 178,201 178,194 179,194 179,196 180,196 180,205 181,205 181,200 182,200 182,202 183,202 183,204 184,204 184,210 185,210 185,215 186,215 186,217 187,217 187,218 188,218 188,213 189,213 189,210 190,210 190,208 191,208 191,205 192,205 192,204 193,204 193,202 194,202 194,202 195,202 195,201 196,201 196,200 197,200 197,198 198,198 198,200 199,200 199,199 200,199 200,204 201,204 201,199 202,199 202,197 203,197 203,197 204,197 204,200 205,200 205,203 206,203 206,205 207,205 207,196 208,196 208,200 209,200 209,197 210,197 210,197 211,197 211,199 212,199 212,204 213,204 213,198 214,198 214,192 215,192 215,201 216,201 216,201 217,201 217,196 218,196 218,196 219,196 219,196 220,196 220,191 221,191 221,200 222,200 222,205 223,205 223,200 224,200 224,199 225,199 225,197 226,197 226,197 227,197 227,200 228,200 228,197 229,197 229,195 230,195 230,195 231,195 231,206 232,206 232,197 233,197 233,199 234,199 234,199 235,199 235,199 236,199 236,199 237,199 237,205 238,205 238,196 239,196 239,195 240,195 240,197 241,197 241,200 242,200 242,197 243,197 243,198 244,198 244,198 245,198 245,196 246,196 246,201 247,201 247,195 248,195 248,205 249,205 249,196 250,196 250,200 251,200 251,202 252,202 252,195 253,195 253,195 254,195 254,195 255,195 255,195 256,195 256,195 257,195 257,195 258,195 258,201 259,201 259,206 260,206 260,207 261,207 261,222 262,222 262,224 263,224 263,209 264,209 264,214 265,214 265,210 266,210 266,209 267,209 267,203 268,203 268,203 269,203 269,204 270,204 270,200 271,200 271,203 272,203 272,197 273,197 273,199 274,199 274,199 275,199 275,199 276,199 276,196 277,196 277,198 278,198 278,198 279,198 279,202 280,202 280,203 281,203 281,199 282,199 282,196 283,196 283,203 284,203 284,196 285,196 285,195 286,195 286,198 287,198 287,202 288,202 288,196 289,196 289,192 290,192 290,198 291,198 291,201 292,201 292,198 293,198 293,198 294,198 294,198 295,198 295,197 296,197 296,192 297,192 297,202 298,202 298,194 299,194 299,197 300,197 300,204 301,204 301,191 302,191 302,197 303,197 303,190 304,190 304,197 305,197 305,201 306,201 306,198 307,198 307,200 308,200 308,197 309,197 309,195 310,195 310,196 311,196 311,200 312,200 312,197 313,197 313,200 314,200 314,201 315,201 315,201 316,201 316,198 317,198 317,198 318,198 318,196 319,196 319,196 320,196 320,200 321,200 321,200 322,200 322,200 323,200 323,194 324,194 324,191 325,191 325,198 326,198 326,198 327,198 327,194 328,194 328,196 329,196 329,196 330,196 330,196 331,196 331,196 332,196 332,195 333,195 333,195 334,195 334,196 335,196 335,201 336,201 336,207 337,207 337,207 338,207 338,212 339,212 339,212 340,212 340,215 341,215 341,222 342,222 342,222 343,222 343,215 344,215 344,210 345,210 345,210 346,210 346,206 347,206 347,205 348,205 348,202 349,202 349,197 350,197 350,200 351,200 351,199 352,199 352,199 353,199 353,196 354,196 354,191 355,191 355,201 356,201 356,197 357,197 357,204 358,204 358,200 359,200 359,193 360,193 360,201 361,201 361,199 362,199 362,199 363,199 363,196 364,196 364,196 365,196 365,201 366,201 366,197 367,197 367,199 368,199 368,197 369,197 369,200 370,200 370,196 371,196 371,198 372,198 372,199 373,199 373,205 374,205 374,196 375,196 375,201 376,201 376,195 377,195 377,195 378,195 378,199 379,199 379,198 380,198 380,195 381,195 381,201 382,201 382,201 383,201 383,193 384,193 384,203 385,203 385,205 386,205 386,197 387,197 387,199 388,199 388,197 389,197 389,197 390,197 390,197 391,197 391,192 392,192 392,195 393,195 393,201 394,201 394,200 395,200 395,196 396,196 396,204 397,204 397,192 398,192 398,198 399,198 399,195 400,195 400,197 401,197 401,202 402,202 402,196 403,196 403,198 404,198 404,191 405,191 405,195 406,195 406,195 407,195 407,195 408,195 408,195 409,195 409,196 410,196 410,193 411,193 411,193 412,193 412,199 413,199 413,205 414,205 414,190 415,190 415,199 416,199 416,203 417,203 417,194 418,194 418,200 419,200 419,200 420,200 420,196 421,196 421,191 422,191 422,200 423,200 423,201 424,201 424,195 425,195 425,195 426,195 426,195 427,195 427,198 428,198 428,196 429,196 429,196 430,196 430,196 431,196 431,200 432,200 432,197 433,197 433,200 434,200 434,203 435,203 435,193 436,193 436,193 437,193 437,198 438,198 438,198 439,198 439,201 440,201 440,201 441,201 441,190 442,190 442,198 443,198 443,198 444,198 444,197 445,197 445,196 446,196 446,196 447,196 447,196 448,196 448,200 449,200 449,200 450,200 450,198 451,198 451,191 452,191 452,196 453,196 453,196 454,196 454,205 455,205 455,196 456,196 456,197 457,197 457,197 458,197 458,192 459,192 459,199 460,199 460,191 461,191 461,201 462,201 462,195 463,195 463,195 464,195 464,197 465,197 465,197 466,197 466,195 467,195 467,198 468,198 468,206 469,206 469,206 470,206 470,197 471,197 471,198 472,198 472,191 473,191 473,200 474,200 474,200 475,200 475,200 476,200 476,200 477,200 477,191 478,191 478,190 479,190 479,201 480,201 480,201 481,201 481,201 482,201 482,196 483,196 483,197 484,197 484,197 485,197 485,190 486,190 486,197 487,197 487,200 488,200 488,200 489,200 489,196 490,196 490,202 491,202 491,193 492,193 492,199 493,199 493,199 494,199 494,199 495,199 495,203 496,203 496,195 497,195 497,200 498,200 498,205 499,205 499,196 500,196 500,200 501,200 501,203 502,203 502,194 503,194 503,197 504,197 504,197 505,197 505,200 506,200 506,197 507,197 507,199 508,199 508,201 509,201 509,201 510,201 510,194 511,194 511,196 512,196 512,195 513,195 513,200 514,200 514,200 515,200 515,198 516,198 516,199 517,199 517,201 518,201 518,195 519,195 519,195 520,195 520,198 521,198 521,199 522,199 522,199 523,199 523,205 524,205 524,197 525,197 525,191 526,191 526,201 527,201 527,201 528,201 528,197 529,197 529,198 530,198 530,205 531,205 531,191 532,191 532,204 533,204 533,197 534,197 534,200 535,200 535,192 536,192 536,199 537,199 537,196 538,196 538,199 539,199 539,199 540,199 540,198 541,198 541,198 542,198 542,197 543,197 543,190 544,190 544,190 545,190 545,198 546,198 546,200 547,200 547,197 548,197 548,205 549,205 549,200 550,200 550,200 551,200 551,199 552,199 552,196 553,196 553,198 554,198 554,205 555,205 555,193 556,193 556,195 557,195 557,195 558,195 558,190 559,190 559,196 560,196 560,200 561,200 561,200 562,200 562,201 563,201 563,196 564,196 564,197 565,197 565,204 566,204 566,199 567,199 567,196 568,196 568,197 569,197 569,196 570,196 570,201 571,201 571,198 572,198 572,198 573,198 573,198 574,198 574,190 575,190 575,199 576,199 576,200 577,200 577,196 578,196 578,200 579,200 579,201 580,201 580,200 581,200 581,192 582,192 582,201 583,201 583,197 584,197 584,199 585,199 585,199 586,199 586,199 587,199 587,198 588,198 588,198 589,198 589,200 590,200 590,199 591,199 591,196 592,196 592,195 593,195 593,195 594,195 594,196 595,196 595,197 596,197 596,200 597,200 597,200 598,200 598,195 599,195 599,198 600,198 600,202 601,202 601,196 602,196 602,201 603,201 603,197 604,197 604,206 605,206 605,196 606,196 606,196 607,196 607,197 608,197 608,198 609,198 609,198 610,198 610,197 611,197 611,206 612,206 612,206 613,206 613,191 614,191 614,199 615,199 615,202 616,202 616,198 617,198 617,201 618,201 618,196 619,196 619,192 620,192 620,198 621,198 621,198 622,198 622,196 623,196 623,197 624,197 624,200 625,200 625,200 626,200 626,195 627,195 627,195 628,195 628,197 629,197 629,200 630,200 630,200 631,200 631,200 632,200 632,199 633,199 633,201 634,201 634,201 635,201 635,205 636,205 636,196 637,196 637,199 638,199 638,199 639,199 639,206 640,206 640,200 641,200 641,198 642,198 642,202 643,202 643,198 644,198 644,198 645,198 645,201 646,201 646,190 647,190 647,192 648,192 648,200 649,200 649,203 650,203 650,203 651,203 651,204 652,204 652,224 653,224 653,224 654,224 654,241 653,241 653,241 652,241 652,269 651,269 651,269 650,269 650,258 649,258 649,263 648,263 648,259 647,259 647,266 646,266 646,265 645,265 645,263 644,263 644,264 643,264 643,263 642,263 642,268 641,268 641,263 640,263 640,263 639,263 639,268 638,268 638,267 637,267 637,272 636,272 636,269 635,269 635,271 634,271 634,272 633,272 633,263 632,263 632,264 631,264 631,266 630,266 630,266 629,266 629,260 628,260 628,263 627,263 627,266 626,266 626,273 625,273 625,264 624,264 624,272 623,272 623,269 622,269 622,270 621,270 621,268 620,268 620,259 619,259 619,265 618,265 618,265 617,265 617,271 616,271 616,268 615,268 615,274 614,274 614,269 613,269 613,274 612,274 612,267 611,267 611,269 610,269 610,270 609,270 609,264 608,264 608,263 607,263 607,267 606,267 606,263 605,263 605,269 604,269 604,269 603,269 603,268 602,268 602,267 601,267 601,264 600,264 600,267 599,267 599,268 598,268 598,268 597,268 597,263 596,263 596,262 595,262 595,269 594,269 594,264 593,264 593,267 592,267 592,267 591,267 591,264 590,264 590,264 589,264 589,269 588,269 588,262 587,262 587,267 586,267 586,264 585,264 585,265 584,265 584,265 583,265 583,265 582,265 582,264 581,264 581,266 580,266 580,271 579,271 579,266 578,266 578,268 577,268 577,265 576,265 576,266 575,266 575,263 574,263 574,263 573,263 573,269 572,269 572,266 571,266 571,266 570,266 570,266 569,266 569,266 568,266 568,270 567,270 567,263 566,263 566,265 565,265 565,264 564,264 564,264 563,264 563,264 562,264 562,264 561,264 561,265 560,265 560,265 559,265 559,264 558,264 558,263 557,263 557,266 556,266 556,264 555,264 555,264 554,264 554,264 553,264 553,264 552,264 552,264 551,264 551,269 550,269 550,269 549,269 549,269 548,269 548,265 547,265 547,264 546,264 546,268 545,268 545,264 544,264 544,258 543,258 543,264 542,264 542,268 541,268 541,259 540,259 540,271 539,271 539,264 538,264 538,267 537,267 537,267 536,267 536,266 535,266 535,264 534,264 534,266 533,266 533,266 532,266 532,268 531,268 531,268 530,268 530,269 529,269 529,274 528,274 528,266 527,266 527,266 526,266 526,266 525,266 525,266 524,266 524,266 523,266 523,265 522,265 522,266 521,266 521,274 520,274 520,267 519,267 519,261 518,261 518,266 517,266 517,266 516,266 516,267 515,267 515,258 514,258 514,259 513,259 513,264 512,264 512,266 511,266 511,268 510,268 510,268 509,268 509,266 508,266 508,266 507,266 507,266 506,266 506,266 505,266 505,262 504,262 504,266 503,266 503,259 502,259 502,266 501,266 501,258 500,258 500,266 499,266 499,267 498,267 498,266 497,266 497,273 496,273 496,274 495,274 495,261 494,261 494,258 493,258 493,271 492,271 492,265 491,265 491,263 490,263 490,263 489,263 489,267 488,267 488,267 487,267 487,263 486,263 486,269 485,269 485,263 484,263 484,264 483,264 483,273 482,273 482,267 481,267 481,267 480,267 480,270 479,270 479,264 478,264 478,267 477,267 477,264 476,264 476,269 475,269 475,274 474,274 474,264 473,264 473,274 472,274 472,272 471,272 471,267 470,267 470,268 469,268 469,266 468,266 468,266 467,266 467,269 466,269 466,267 465,267 465,266 464,266 464,265 463,265 463,268 462,268 462,259 461,259 461,263 460,263 460,271 459,271 459,264 458,264 458,266 457,266 457,264 456,264 456,265 455,265 455,266 454,266 454,267 453,267 453,266 452,266 452,267 451,267 451,264 450,264 450,264 449,264 449,265 448,265 448,264 447,264 447,273 446,273 446,264 445,264 445,264 444,264 444,264 443,264 443,264 442,264 442,270 441,270 441,264 440,264 440,264 439,264 439,264 438,264 438,264 437,264 437,272 436,272 436,266 435,266 435,266 434,266 434,266 433,266 433,261 432,261 432,269 431,269 431,267 430,267 430,270 429,270 429,269 428,269 428,267 427,267 427,261 426,261 426,266 425,266 425,260 424,260 424,267 423,267 423,267 422,267 422,264 421,264 421,264 420,264 420,264 419,264 419,264 418,264 418,271 417,271 417,264 416,264 416,272 415,272 415,264 414,264 414,265 413,265 413,265 412,265 412,269 411,269 411,265 410,265 410,264 409,264 409,264 408,264 408,264 407,264 407,262 406,262 406,266 405,266 405,265 404,265 404,263 403,263 403,260 402,260 402,265 401,265 401,267 400,267 400,270 399,270 399,267 398,267 398,267 397,267 397,267 396,267 396,265 395,265 395,265 394,265 394,265 393,265 393,268 392,268 392,265 391,265 391,267 390,267 390,267 389,267 389,266 388,266 388,263 387,263 387,262 386,262 386,266 385,266 385,265 384,265 384,270 383,270 383,264 382,264 382,271 381,271 381,263 380,263 380,264 379,264 379,274 378,274 378,266 377,266 377,266 376,266 376,261 375,261 375,271 374,271 374,266 373,266 373,266 372,266 372,260 371,260 371,261 370,261 370,267 369,267 369,269 368,269 368,269 367,269 367,269 366,269 366,273 365,273 365,266 364,266 364,264 363,264 363,266 362,266 362,266 361,266 361,267 360,267 360,267 359,267 359,265 358,265 358,269 357,269 357,268 356,268 356,261 355,261 355,267 354,267 354,265 353,265 353,265 352,265 352,261 351,261 351,266 350,266 350,266 349,266 349,264 348,264 348,259 347,259 347,260 346,260 346,256 345,256 345,254 344,254 344,250 343,250 343,244 342,244 342,245 341,245 341,242 340,242 340,256 339,256 339,256 338,256 338,262 337,262 337,261 336,261 336,267 335,267 335,267 334,267 334,269 333,269 333,265 332,265 332,262 331,262 331,267 330,267 330,267 329,267 329,267 328,267 328,268 327,268 327,268 326,268 326,269 325,269 325,268 324,268 324,258 323,258 323,264 322,264 322,264 321,264 321,263 320,263 320,263 319,263 319,263 318,263 318,268 317,268 317,268 316,268 316,268 315,268 315,269 314,269 314,258 313,258 313,263 312,263 312,264 311,264 311,264 310,264 310,264 309,264 309,264 308,264 308,264 307,264 307,258 306,258 306,266 305,266 305,266 304,266 304,266 303,266 303,266 302,266 302,266 301,266 301,261 300,261 300,265 299,265 299,265 298,265 298,265 297,265 297,269 296,269 296,259 295,259 295,266 294,266 294,266 293,266 293,266 292,266 292,259 291,259 291,265 290,265 290,265 289,265 289,266 288,266 288,271 287,271 287,264 286,264 286,266 285,266 285,266 284,266 284,266 283,266 283,263 282,263 282,263 281,263 281,264 280,264 280,259 279,259 279,268 278,268 278,266 277,266 277,267 276,267 276,265 275,265 275,265 274,265 274,262 273,262 273,268 272,268 272,269 271,269 271,268 270,268 270,268 269,268 269,268 268,268 268,263 267,263 267,259 266,259 266,257 265,257 265,252 264,252 264,249 263,249 263,244 262,244 262,247 261,247 261,244 260,244 260,249 259,249 259,252 258,252 258,261 257,261 257,260 256,260 256,266 255,266 255,271 254,271 254,264 253,264 253,268 252,268 252,268 251,268 251,263 250,263 250,268 249,268 249,264 248,264 248,266 247,266 247,264 246,264 246,264 245,264 245,269 244,269 244,269 243,269 243,264 242,264 242,267 241,267 241,268 240,268 240,269 239,269 239,265 238,265 238,265 237,265 237,269 236,269 236,268 235,268 235,265 234,265 234,264 233,264 233,264 232,264 232,268 231,268 231,268 230,268 230,263 229,263 229,266 228,266 228,264 227,264 227,264 226,264 226,263 225,263 225,267 224,267 224,267 223,267 223,262 222,262 222,264 221,264 221,272 220,272 220,259 219,259 219,268 218,268 218,262 217,262 217,269 216,269 216,264 215,264 215,264 214,264 214,264 213,264 213,264 212,264 212,271 211,271 211,265 210,265 210,265 209,265 209,267 208,267 208,265 207,265 207,258 206,258 206,267 205,267 205,265 204,265 204,274 203,274 203,268 202,268 202,265 201,265 201,266 200,266 200,265 199,265 199,269 198,269 198,269 197,269 197,264 196,264 196,263 195,263 195,263 194,263 194,256 193,256 193,255 192,255 192,251 191,251 191,250 190,250 190,246 189,246 189,245 188,245 188,232 187,232 187,248 186,248 186,256 185,256 185,259 184,259 184,262 183,262 183,266 182,266 182,272 181,272 181,264 180,264 180,264 179,264 179,264 178,264 178,259 177,259 177,263 176,263 176,268 175,268 175,269 174,269 174,266 173,266 173,266 172,266 172,269 171,269 171,269 170,269 170,269 169,269 169,267 168,267 168,267 167,267 167,263 166,263 166,264 165,264 165,268 164,268 164,268 163,268 163,268 162,268 162,267 161,267 161,267 160,267 160,269 159,269 159,268 158,268 158,264 157,264 157,264 156,264 156,264 155,264 155,268 154,268 154,271 153,271 153,265 152,265 152,274 151,274 151,264 150,264 150,274 149,274 149,269 148,269 148,264 147,264 147,268 146,268 146,263 145,263 145,263 144,263 144,263 143,263 143,268 142,268 142,266 141,266 141,274 140,274 140,264 139,264 139,259 138,259 138,266 137,266 137,263 136,263 136,274 135,274 135,266 134,266 134,266 133,266 133,265 132,265 132,267 131,267 131,265 130,265 130,259 129,259 129,259 128,259 128,266 127,266 127,259 126,259 126,268 125,268 125,267 124,267 124,268 123,268 123,267 122,267 122,267 121,267 121,268 120,268 120,268 119,268 119,268 118,268 118,265 117,265 117,265 116,265 116,264 115,264 115,260 114,260 114,266 113,266 113,261 112,261 112,267 111,267 111,266 110,266 110,261 109,261 109,267 108,267 108,265 107,265 107,259 106,259 106,267 105,267 105,267 104,267 104,267 103,267 103,267 102,267 102,267 101,267 101,267 100,267 100,264 99,264 99,266 98,266 98,266 97,266 97,260 96,260 96,268 95,268 95,268 94,268 94,262 93,262 93,266 92,266 92,265 91,265 91,265 90,265 90,265 89,265 89,265 88,265 88,269 87,269 87,268 86,268 86,260 85,260 85,274 84,274 84,265 83,265 83,259 82,259 82,273 81,273 81,264 80,264 80,258 79,258 79,269 78,269 78,269 77,269 77,269 76,269 76,264 75,264 75,263 74,263 74,264 73,264 73,265 72,265 72,264 71,264 71,264 70,264 70,264 69,264 69,265 68,265 68,267 67,267 67,263 66,263 66,263 65,263 65,269 64,269 64,264 63,264 63,266 62,266 62,269 61,269 61,261 60,261 60,266 59,266 59,264 58,264 58,267 57,267 57,265 56,265 56,263 55,263 55,267 54,267 54,269 53,269 53,269 52,269 52,265 51,265 51,266 50,266 50,269 49,269 49,268 48,268 48,264 47,264 47,266 46,266 46,271 45,271 45,267 44,267 44,267 43,267 43,271 42,271 42,266 41,266 41,261 40,261 40,269 39,269 39,269 38,269 38,269 37,269 37,269 36,269 36,264 35,264 35,265 34,265 34,265 33,265 33,265 32,265 32,267 31,267 31,273 30,273 30,267 29,267 29,268 28,268 28,266 27,266 27,266 26,266 26,259 25,259 25,263 24,263 24,268 23,268 23,265 22,265 22,264 21,264 21,259 20,259 20,264 19,264 19,266 18,266 18,263 17,263 17,264 16,264 16,264 15,264 15,267 14,267 14,268 13,268Z" fill="#ffff4a"/>
</svg>

<!-- channel marker -->
<svg class="a" style="left:0;top:224px" width="14" height="17" viewBox="0 0 14 17">
  <path d="M0,0.5 H6 L13,8.5 L6,15.5 H0 Z" fill="#ffff4a"/>
  <rect x="1.5" y="3" width="1.6" height="10" fill="#3c3d48"/>
</svg>

<!-- time marker label -->
<svg class="a" style="left:297px;top:22px" width="72" height="24" viewBox="0 0 72 24">
  <path d="M1,0.5 H71 V13 L68,15.5 H42 L36,22.5 L30,15.5 H4 L1,12.5 Z" fill="#3b64f4"/><path d="M1,0.5 H71 M71,13 L68,15.5 H42 L36,22.5 L30,15.5 H4 L1,12.5" fill="none" stroke="#90d0ff" stroke-width="1"/>
  
</svg>

<!-- top bar -->

<svg class="a" style="left:0;top:0" width="799" height="22" viewBox="0 0 799 22">
  <!-- icon 1 -->
  <rect x="143.5" y="-1" width="22" height="17.5" fill="#000" stroke="#a8a8a8"/>
  <path d="M144.00,3.00 L144.33,2.43 L144.67,1.89 L145.00,1.38 L145.33,0.93 L145.67,0.56 L146.00,0.27 L146.33,0.08 L146.67,0.00 L147.00,0.03 L147.33,0.16 L147.67,0.40 L148.00,0.73 L148.33,1.15 L148.67,1.63 L149.00,2.15 L149.33,2.71 L149.67,3.29 L150.00,3.85 L150.33,4.37 L150.67,4.85 L151.00,5.27 L151.33,5.60 L151.67,5.84 L152.00,5.97 L152.33,6.00 L152.67,5.92 L153.00,5.73 L153.33,5.44 L153.67,5.07 L154.00,4.62 L154.33,4.11 L154.67,3.57 L155.00,3.00 L155.33,2.43 L155.67,1.89 L156.00,1.38 L156.33,0.93 L156.67,0.56 L157.00,0.27 L157.33,0.08 L157.67,0.00 L158.00,0.03 L158.33,0.16 L158.67,0.40 L159.00,0.73 L159.33,1.15 L159.67,1.63 L160.00,2.15 L160.33,2.71 L160.67,3.29 L161.00,3.85 L161.33,4.37 L161.67,4.85 L162.00,5.27 L162.33,5.60 L162.67,5.84 L163.00,5.97 L163.33,6.00 L163.67,5.92 L164.00,5.73 L164.33,5.44 L164.67,5.07 L165.00,4.62 L165.33,4.11 L165.67,3.57 L166.00,3.00" fill="none" stroke="#ffff4a" stroke-width="1.6"/>
  <path d="M144.00,10.50 L144.33,9.93 L144.67,9.39 L145.00,8.88 L145.33,8.43 L145.67,8.06 L146.00,7.77 L146.33,7.58 L146.67,7.50 L147.00,7.53 L147.33,7.66 L147.67,7.90 L148.00,8.23 L148.33,8.65 L148.67,9.13 L149.00,9.65 L149.33,10.21 L149.67,10.79 L150.00,11.35 L150.33,11.87 L150.67,12.35 L151.00,12.77 L151.33,13.10 L151.67,13.34 L152.00,13.47 L152.33,13.50 L152.67,13.42 L153.00,13.23 L153.33,12.94 L153.67,12.57 L154.00,12.12 L154.33,11.61 L154.67,11.07 L155.00,10.50 L155.33,9.93 L155.67,9.39 L156.00,8.88 L156.33,8.43 L156.67,8.06 L157.00,7.77 L157.33,7.58 L157.67,7.50 L158.00,7.53 L158.33,7.66 L158.67,7.90 L159.00,8.23 L159.33,8.65 L159.67,9.13 L160.00,9.65 L160.33,10.21 L160.67,10.79 L161.00,11.35 L161.33,11.87 L161.67,12.35 L162.00,12.77 L162.33,13.10 L162.67,13.34 L163.00,13.47 L163.33,13.50 L163.67,13.42 L164.00,13.23 L164.33,12.94 L164.67,12.57 L165.00,12.12 L165.33,11.61 L165.67,11.07 L166.00,10.50" fill="none" stroke="#20e0ff" stroke-width="1.6"/>
  <!-- icon 2 -->
  <rect x="168.5" y="-1" width="22" height="17.5" fill="#000" stroke="#a8a8a8"/>
  <path d="M172,14 L186,0" stroke="#20e040" stroke-width="2"/>
  <!-- icon 3 -->
  <rect x="193.5" y="-1" width="22" height="17.5" fill="#000" stroke="#a8a8a8"/>
  <path d="M202,-1 H211 C212,2 213,4 213,6.5 C212.5,8 211.5,8 210.5,9 C209.5,10 209.5,13 208.5,14.8 H198.5 C197,14 196.5,11 197,8 C198,6.5 200,6.5 202,6.5 C201.5,4 201.5,1 202,-1 Z" fill="#8e8e8e"/><path d="M199.5,8 V14 M202,8 V14 M205,9 V13 M204,2 V6 M207,1 V5" stroke="#5a5a5a" stroke-width="0.7"/>
  <!-- separator -->
  <path d="M218.5,0 V15 L220.5,17" fill="none" stroke="#2a2c2a" stroke-width="1"/>
  <!-- trigger pulse icon -->
  <path d="M269,14.5 H273.6 V-1 H283.4 V14.5 H290" fill="none" stroke="#d8ffff" stroke-width="1.3"/>
  <path d="M270.3,11.5 V16.5 M272,12 V16 M277,0 V2.5 M280,0 V2.5 M285.5,11.5 V16 M287.5,11.5 V16 M289.5,11.5 V16" stroke="#d8ffff" stroke-width="0.9"/>
  <!-- red dot -->
  <circle cx="302" cy="7.5" r="8.8" fill="#ff1c1c"/>
  <!-- key -->
  <path d="M318,6 H332 V9 H328 V12 H326 V9 H324 V12 H322 V9 H320 V11 H318 Z" fill="#3e403c"/><ellipse cx="336.5" cy="7.5" rx="3.2" ry="4.8" fill="none" stroke="#3e403c" stroke-width="2"/>
  <!-- floppy -->
  <path d="M343.5,-1 H363.5 V15.5 H346 L343.5,13 Z" fill="#d0ffff" stroke="#d0ffff"/>
  <path d="M345,-1 H362 V14 H347 L345,12 Z" fill="#555752"/>
  <rect x="347.5" y="-1" width="12" height="5.5" fill="none" stroke="#5a3ccc" stroke-width="1"/>
  <rect x="347.5" y="-1" width="12" height="5.5" fill="none" stroke="#d0ffff" stroke-width="0.5"/>
  <rect x="349" y="8" width="10" height="6" fill="#d0ffff"/>
  <rect x="350" y="9" width="2" height="5" fill="#4a2fb8"/>
  <path d="M346.5,8 V14 M346.5,7.5 H360.5 V14" fill="none" stroke="#5a3ccc" stroke-width="1"/>
  <!-- printer -->
  <path d="M373.5,-1 V5.5 H371 C370,5.5 369.5,6 369.5,7 V14 C369.5,15 370,15.5 371,15.5 H388 C389,15.5 389.5,15 389.5,14 V7 C389.5,6 389,5.5 388,5.5 H385.5 V-1 Z" fill="none" stroke="#40423e" stroke-width="1.4"/>
  <rect x="372" y="9" width="15" height="3.5" fill="#40423e"/>
  <path d="M375,1.5 H384 M375,4 H384" stroke="#40423e" stroke-width="1"/>
  <!-- separator -->
  <rect x="394.5" y="0" width="1.2" height="19" fill="#1e1f1e"/>
  <!-- thumbnail -->
  <rect x="401" y="0" width="114" height="18" fill="#000"/>
  <path d="M401.5,0 V17.5 H514.5 V0" fill="none" stroke="#6a62b0" stroke-width="1"/>
  <path d="M403.00,8.00 L403.33,5.76 L403.67,3.99 L404.00,3.08 L404.33,3.21 L404.67,4.36 L405.00,6.29 L405.33,8.58 L405.67,10.75 L406.00,12.33 L406.33,12.99 L406.67,12.59 L407.00,11.21 L407.33,9.15 L407.67,6.85 L408.00,4.79 L408.33,3.41 L408.67,3.01 L409.00,3.67 L409.33,5.25 L409.67,7.42 L410.00,9.71 L410.33,11.64 L410.67,12.79 L411.00,12.92 L411.33,12.01 L411.67,10.24 L412.00,8.00" fill="none" stroke="#0e4c52" stroke-width="1.1"/>
  <path d="M504.00,8.00 L504.33,5.76 L504.67,3.99 L505.00,3.08 L505.33,3.21 L505.67,4.36 L506.00,6.29 L506.33,8.58 L506.67,10.75 L507.00,12.33 L507.33,12.99 L507.67,12.59 L508.00,11.21 L508.33,9.15 L508.67,6.85 L509.00,4.79 L509.33,3.41 L509.67,3.01 L510.00,3.67 L510.33,5.25 L510.67,7.42 L511.00,9.71 L511.33,11.64 L511.67,12.79 L512.00,12.92 L512.33,12.01 L512.67,10.24 L513.00,8.00" fill="none" stroke="#0e4c52" stroke-width="1.1"/>
  <path d="M414.50,7.73 L414.83,9.21 L415.17,10.56 L415.50,11.70 L415.83,12.53 L416.17,13.00 L416.50,13.08 L416.83,12.76 L417.17,12.06 L417.50,11.04 L417.83,9.76 L418.17,8.32 L418.50,6.82 L418.83,5.37 L419.17,4.07 L419.50,3.02 L419.83,2.29 L420.17,1.93 L420.50,1.97 L420.83,2.41 L421.17,3.21 L421.50,4.32 L421.83,5.66 L422.17,7.13 L422.50,8.63 L422.83,10.04 L423.17,11.27 L423.50,12.24 L423.83,12.86 L424.17,13.10 L424.50,12.94 L424.83,12.38 L425.17,11.48 L425.50,10.29 L425.83,8.91 L426.17,7.42 L426.50,5.93 L426.83,4.56 L427.17,3.40 L427.50,2.54 L427.83,2.03 L428.17,1.91 L428.50,2.19 L428.83,2.85 L429.17,3.85 L429.50,5.11 L429.83,6.53 L430.17,8.03 L430.50,9.49 L430.83,10.81 L431.17,11.89 L431.50,12.65 L431.83,13.05 L432.17,13.05 L432.50,12.65 L432.83,11.88 L433.17,10.80 L433.50,9.48 L433.83,8.02 L434.17,6.52 L434.50,5.09 L434.83,3.84 L435.17,2.84 L435.50,2.19 L435.83,1.91 L436.17,2.03 L436.50,2.54 L436.83,3.41 L437.17,4.58 L437.50,5.95 L437.83,7.43 L438.17,8.92 L438.50,10.31 L438.83,11.49 L439.17,12.39 L439.50,12.94 L439.83,13.10 L440.17,12.86 L440.50,12.23 L440.83,11.26 L441.17,10.03 L441.50,8.61 L441.83,7.12 L442.17,5.65 L442.50,4.31 L442.83,3.21 L443.17,2.41 L443.50,1.97 L443.83,1.93 L444.17,2.29 L444.50,3.03 L444.83,4.08 L445.17,5.38 L445.50,6.83 L445.83,8.33 L446.17,9.77 L446.50,11.05 L446.83,12.07 L447.17,12.76 L447.50,13.08 L447.83,13.00 L448.17,12.52 L448.50,11.69 L448.83,10.55 L449.17,9.19 L449.50,7.72 L449.83,6.23 L450.17,4.82 L450.50,3.62 L450.83,2.68 L451.17,2.10 L451.50,1.90 L451.83,2.10 L452.17,2.69 L452.50,3.63 L452.83,4.84 L453.17,6.24 L453.50,7.73 L453.83,9.21 L454.17,10.56 L454.50,11.70 L454.83,12.53 L455.17,13.00 L455.50,13.08 L455.83,12.76 L456.17,12.06 L456.50,11.04 L456.83,9.76 L457.17,8.32 L457.50,6.82 L457.83,5.37 L458.17,4.07 L458.50,3.02 L458.83,2.29 L459.17,1.93 L459.50,1.97 L459.83,2.41 L460.17,3.21 L460.50,4.32 L460.83,5.66 L461.17,7.13 L461.50,8.63 L461.83,10.04 L462.17,11.27 L462.50,12.24 L462.83,12.86 L463.17,13.10 L463.50,12.94 L463.83,12.38 L464.17,11.48 L464.50,10.29 L464.83,8.91 L465.17,7.42 L465.50,5.93 L465.83,4.56 L466.17,3.40 L466.50,2.54 L466.83,2.03 L467.17,1.91 L467.50,2.19 L467.83,2.85 L468.17,3.85 L468.50,5.11 L468.83,6.53 L469.17,8.03 L469.50,9.49 L469.83,10.81 L470.17,11.89 L470.50,12.65 L470.83,13.05 L471.17,13.05 L471.50,12.65 L471.83,11.88 L472.17,10.80 L472.50,9.48 L472.83,8.02 L473.17,6.52 L473.50,5.09 L473.83,3.84 L474.17,2.84 L474.50,2.19 L474.83,1.91 L475.17,2.03 L475.50,2.54 L475.83,3.41 L476.17,4.58 L476.50,5.95 L476.83,7.43 L477.17,8.92 L477.50,10.31 L477.83,11.49 L478.17,12.39 L478.50,12.94 L478.83,13.10 L479.17,12.86 L479.50,12.23 L479.83,11.26 L480.17,10.03 L480.50,8.61 L480.83,7.12 L481.17,5.65 L481.50,4.31 L481.83,3.21 L482.17,2.41 L482.50,1.97 L482.83,1.93 L483.17,2.29 L483.50,3.03 L483.83,4.08 L484.17,5.38 L484.50,6.83 L484.83,8.33 L485.17,9.77 L485.50,11.05 L485.83,12.07 L486.17,12.76 L486.50,13.08 L486.83,13.00 L487.17,12.52 L487.50,11.69 L487.83,10.55 L488.17,9.19 L488.50,7.72 L488.83,6.23 L489.17,4.82 L489.50,3.62 L489.83,2.68 L490.17,2.10 L490.50,1.90 L490.83,2.10 L491.17,2.69 L491.50,3.63 L491.83,4.84 L492.17,6.24 L492.50,7.73 L492.83,9.21 L493.17,10.56 L493.50,11.70 L493.83,12.53 L494.17,13.00 L494.50,13.08 L494.83,12.76 L495.17,12.06 L495.50,11.04 L495.83,9.76 L496.17,8.32 L496.50,6.82 L496.83,5.37 L497.17,4.07 L497.50,3.02 L497.83,2.29 L498.17,1.93 L498.50,1.97 L498.83,2.41 L499.17,3.21 L499.50,4.32 L499.83,5.66 L500.17,7.13 L500.50,8.63 L500.83,10.04 L501.17,11.27 L501.50,12.24" fill="none" stroke="#28eaff" stroke-width="2"/>
  <path d="M413.5,-1 V15.8 H502.5 V-1" fill="none" stroke="#f5662a" stroke-width="2"/>
  <!-- W box -->
  <rect x="519.5" y="-1" width="21" height="18.5" fill="#000" stroke="#a8a8a8"/>
  <!-- 800us pill -->
  <path d="M545,-1 H644 V11 C644,15 641.5,17 637.5,17 H551.5 C547.5,17 545,15 545,11 Z" fill="#000"/>
  <!-- separator top right -->
  
</svg>

<!-- right panel -->
<div class="a" style="left:654px;top:0;width:1px;height:473px;background:#bdbdbd;"></div>
<div class="a" style="left:655px;top:0;width:144px;height:21px;background:#404540;"></div>
<div class="a" style="left:655px;top:21px;width:144px;height:452px;background:#757575;"></div>
<div class="a" style="left:798px;top:0;width:1px;height:473px;background:#2a2a2a;"></div>
<div class="a" style="left:775px;top:0;width:21px;height:17px;background:#ff3a1e;"></div>
<svg class="a" style="left:775px;top:0" width="21" height="17" viewBox="0 0 21 17">
  <path d="M4.3,-0.5 L16.2,12.6 M16.2,-0.5 L4.3,12.6" stroke="#fff" stroke-width="2.5"/>
</svg>

<!-- group boxes -->
<svg class="a" style="left:655px;top:21px" width="144" height="452" viewBox="655 21 144 452" shape-rendering="crispEdges">
  <g id="gb">
  </g>
</svg>

<svg class="a" style="left:655px;top:30px" width="144" height="76" viewBox="655 30 144 76">
  <path d="M663,31.5 H694 M769,31.5 H799 M663,103.5 H799" stroke="#1a1a1a" stroke-width="1"/>
  <path d="M663,32.5 H694 M769,32.5 H799 M663,104.5 H799" stroke="#d2d2d2" stroke-width="1"/>
  <path d="M663.5,31.5 L660.5,34.5 M660.5,100.5 L663.5,103.5" stroke="#1a1a1a" stroke-width="1"/>
  <path d="M663.5,32.5 L660.5,35.5 V100.5 L663.5,104.5" fill="none" stroke="#d2d2d2" stroke-width="1"/>
  <path d="M686.5,59.5 H765.5 M686.5,59.5 V88.5" fill="none" stroke="#888" stroke-width="1"/>
  <path d="M765.5,59.5 V89.5 H686" fill="none" stroke="#6a6a6a" stroke-width="1"/>
</svg>



<svg class="a" style="left:655px;top:114px" width="144" height="76" viewBox="655 114 144 76">
  <path d="M663,115.5 H700 M761,115.5 H799 M663,187.5 H799" stroke="#1a1a1a" stroke-width="1"/>
  <path d="M663,116.5 H700 M761,116.5 H799 M663,188.5 H799" stroke="#d2d2d2" stroke-width="1"/>
  <path d="M663.5,115.5 L660.5,118.5 M660.5,184.5 L663.5,187.5" stroke="#1a1a1a" stroke-width="1"/>
  <path d="M663.5,116.5 L660.5,119.5 V184.5 L663.5,188.5" fill="none" stroke="#d2d2d2" stroke-width="1"/>
  <path d="M686.5,143.5 H765.5 M686.5,143.5 V172.5" fill="none" stroke="#888" stroke-width="1"/>
  <path d="M765.5,143.5 V173.5 H686" fill="none" stroke="#6a6a6a" stroke-width="1"/>
</svg>



<svg class="a" style="left:655px;top:198px" width="144" height="76" viewBox="655 198 144 76">
  <path d="M663,199.5 H707 M755,199.5 H799 M663,271.5 H799" stroke="#1a1a1a" stroke-width="1"/>
  <path d="M663,200.5 H707 M755,200.5 H799 M663,272.5 H799" stroke="#d2d2d2" stroke-width="1"/>
  <path d="M663.5,199.5 L660.5,202.5 M660.5,268.5 L663.5,271.5" stroke="#1a1a1a" stroke-width="1"/>
  <path d="M663.5,200.5 L660.5,203.5 V268.5 L663.5,272.5" fill="none" stroke="#d2d2d2" stroke-width="1"/>
  <path d="M686.5,227.5 H765.5 M686.5,227.5 V256.5" fill="none" stroke="#888" stroke-width="1"/>
  <path d="M765.5,227.5 V257.5 H686" fill="none" stroke="#6a6a6a" stroke-width="1"/>
</svg>




<!-- Cancel button -->
<svg class="a" style="left:675px;top:445px" width="102" height="27" viewBox="0 0 102 27">
  <path d="M4.5,25.5 L1.5,22.5 V4.5 L4.5,1.5 H97" fill="none" stroke="#e6e6e6" stroke-width="1"/>
  <path d="M97,1.5 L100.5,4.5 V22.5 L97.5,25.5 H4.5" fill="none" stroke="#1e1e1e" stroke-width="1"/>
</svg>

<!-- bottom bar -->
<svg class="a" style="left:0;top:442px" width="654" height="31" viewBox="0 442 654 31">
  <!-- DC icon -->
  <rect x="14" y="450" width="18" height="2" fill="#ffff4a"/>
  <path d="M14,454h3v1h-3z M18,454h3v1h-3z M22,454h4v1h-4z M27,454h3v1h-3z" fill="#ffff4a"/>
  <!-- 20 icon -->
  <circle cx="47" cy="457.5" r="9" fill="none" stroke="#3e403c" stroke-width="2.2"/>
  <!-- square wave -->
  <path d="M62,455.5 H66 V451.5 H70 V455.5 H73 V451.5 H77 V455.5 H80" fill="none" stroke="#ffff4a" stroke-width="1.6"/>
  <path d="M62,459.5 H66 V463.5 H70 V459.5 H73 V463.5 H77 V459.5 H80" fill="none" stroke="#6464c8" stroke-width="1.2"/>
  <!-- separators -->
  <rect x="169" y="445" width="1" height="26" fill="#151515"/>
  <rect x="329" y="445" width="1" height="26" fill="#151515"/>
  <rect x="499" y="445" width="1" height="26" fill="#151515"/>
  <!-- pills -->
  <rect x="85" y="446" width="82" height="22" rx="11" fill="#000"/>
  <rect x="402" y="446" width="79" height="22" rx="11" fill="#000"/>
  <rect x="510" y="446" width="131" height="22" rx="11" fill="#000"/>
  <!-- trigger edge icon -->
  <path d="M383,466 H389 L395,450.5 C395.5,449.5 396,449 397,449 H400.5" fill="none" stroke="#a0ccff" stroke-width="2"/>
</svg>

<div class="t" style="left:39.5px;top:449.5px;font-family:'Liberation Sans';font-weight:bold;font-size:14.5px;letter-spacing:-1px;color:#3e403c;transform:scaleX(0.95);transform-origin:0 0;">20</div>
<div class="t" style="left:22.0px;top:-1px;font-family:'Liberation Mono';font-weight:bold;font-size:21.5px;letter-spacing:0px;color:#ffff44;transform:scaleX(1.027);transform-origin:0 0;">Hantek</div>
<div class="t" style="left:680.0px;top:-3px;font-family:'Liberation Sans';font-weight:normal;font-size:21.5px;letter-spacing:0px;color:#ffffff;transform:scaleX(0.972);transform-origin:0 0;">Autoset</div>
<div class="t" style="left:699.0px;top:23px;font-family:'Liberation Sans';font-weight:normal;font-size:17.5px;letter-spacing:1px;color:#ffffff;transform:scaleX(0.928);transform-origin:0 0;-webkit-text-stroke:0.3px #757575;">Average</div>
<div class="t" style="left:705.1px;top:106px;font-family:'Liberation Sans';font-weight:normal;font-size:18.5px;letter-spacing:1px;color:#ffffff;transform:scaleX(0.941);transform-origin:0 0;-webkit-text-stroke:0.3px #757575;">Pk-Pk</div>
<div class="t" style="left:710.9px;top:190px;font-family:'Liberation Sans';font-weight:normal;font-size:16.5px;letter-spacing:1px;color:#ffffff;transform:scaleX(1.118);transform-origin:0 0;-webkit-text-stroke:0.3px #757575;">Freq</div>
<div class="t" style="left:703.1px;top:65px;font-family:'Liberation Sans';font-weight:normal;font-size:20.0px;letter-spacing:0px;color:#f4f4f4;transform:scaleX(0.88);transform-origin:0 0;-webkit-text-stroke:0.3px #757575;">0.00V</div>
<div class="t" style="left:703.1px;top:149px;font-family:'Liberation Sans';font-weight:normal;font-size:20.0px;letter-spacing:0px;color:#f4f4f4;transform:scaleX(0.88);transform-origin:0 0;-webkit-text-stroke:0.3px #757575;">1.68V</div>
<div class="t" style="left:689.0px;top:233px;font-family:'Liberation Sans';font-weight:normal;font-size:20.0px;letter-spacing:0px;color:#f4f4f4;transform:scaleX(0.86);transform-origin:0 0;-webkit-text-stroke:0.3px #757575;">41.66KHz</div>
<div class="t" style="left:697.2px;top:450px;font-family:'Liberation Sans';font-weight:normal;font-size:18.5px;letter-spacing:2px;color:#ffffff;transform:scaleX(0.831);transform-origin:0 0;-webkit-text-stroke:0.3px #757575;">Cancel</div>
<div class="t" style="left:569.0px;top:0px;font-family:'Liberation Sans';font-weight:normal;font-size:18.5px;letter-spacing:0.5px;color:#ffffff;transform:scaleX(0.96);transform-origin:0 0;-webkit-text-stroke:0.3px #000;">800us</div>
<div class="t" style="left:309.1px;top:22px;font-family:'Liberation Sans';font-weight:normal;font-size:18.5px;letter-spacing:0px;color:#ffffff;transform:scaleX(0.887);transform-origin:0 0;-webkit-text-stroke:0.3px #3b64f4;">0.000s</div>
<div class="t" style="left:351.4px;top:448px;font-family:'Liberation Sans';font-weight:normal;font-size:20.0px;letter-spacing:0px;color:#ffff4a;transform:scaleX(0.649);transform-origin:0 0;-webkit-text-stroke:0.3px #555752;">CH1</div>
<div class="t" style="left:103.1px;top:449px;font-family:'Liberation Sans';font-weight:normal;font-size:20.0px;letter-spacing:0px;color:#ffff4a;transform:scaleX(0.86);transform-origin:0 0;-webkit-text-stroke:0.3px #000;">1.00V</div>
<div class="t" style="left:408.2px;top:448px;font-family:'Liberation Sans';font-weight:normal;font-size:20.0px;letter-spacing:0px;color:#ffff4a;transform:scaleX(0.823);transform-origin:0 0;-webkit-text-stroke:0.3px #000;">−40.0mV</div>
<div class="t" style="left:533.1px;top:448px;font-family:'Liberation Sans';font-weight:normal;font-size:20.0px;letter-spacing:0px;color:#ffff4a;transform:scaleX(0.883);transform-origin:0 0;-webkit-text-stroke:0.3px #000;">35.0000Hz</div>
<div class="t" style="left:521.0px;top:-3px;font-family:'Liberation Sans';font-weight:bold;font-size:21.5px;letter-spacing:0px;color:#d8fff8;transform:scaleX(0.895);transform-origin:0 0;">W</div>
<div class="t" style="left:13.1px;top:455px;font-family:'Liberation Sans';font-weight:normal;font-size:14.0px;letter-spacing:0px;color:#ffff4a;transform:scaleX(0.889);transform-origin:0 0;">DC</div>
</body></html>
